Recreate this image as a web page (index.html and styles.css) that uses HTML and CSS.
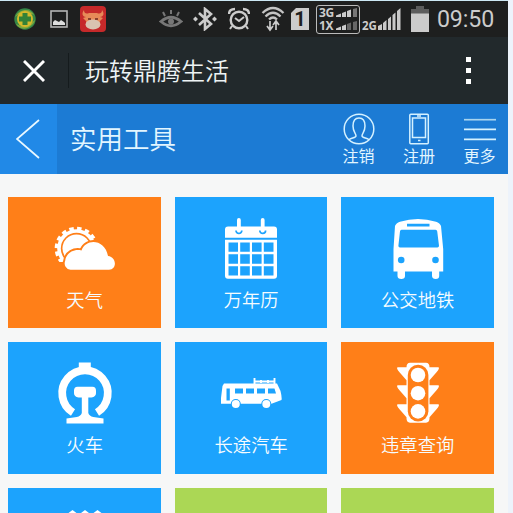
FILE: index.html
```html
<!DOCTYPE html>
<html lang="zh-CN">
<head>
<meta charset="utf-8">
<title>实用工具</title>
<link rel="stylesheet" href="styles.css">
</head>
<body>
<div class="phone">
  <div class="status">
    <svg class="s-shield" width="22" height="22" viewBox="0 0 22 22"><circle cx="11" cy="11" r="10.7" fill="#358747"/><path d="M1 9C5 1 16-1 20 7C12 3 6 5 1 9M21 12C18 21 7 24 2 16C10 20 16 17 21 12" fill="#87a83a"/><circle cx="11" cy="11" r="8" fill="#d4b92b"/><path d="M8.500 5h5v3.500h3.500v5h-3.500v3.500h-5v-3.500H5v-5h3.500z" fill="#338237"/></svg>
    <svg class="s-photo" width="18" height="18" viewBox="0 0 18 18"><rect x="1" y="1" width="16" height="16" fill="none" stroke="#b5b5b5" stroke-width="1.600"/><path d="M3 15v-3l2-2 2 1 2 1 2-2 3 2 1 1v2z" fill="#ddd"/></svg>
    <svg class="s-bull" width="26" height="26" viewBox="0 0 26 26"><rect width="26" height="26" rx="4" fill="#c6292a"/><path d="M4 4c0 4 3 4 5 3h8c2 1 5 1 5-3 3 4 1 7-2 7l3 1-3 3-1 5H7l-1-5-3-3 3-1C3 11 1 8 4 4" fill="#e78a58"/><ellipse cx="13" cy="18.500" rx="7.500" ry="5" fill="#d9c3b0"/><path d="M8 13h3M15 13h3" stroke="#6d2921" stroke-width="1.500"/></svg>
    <svg class="s-eye" width="24" height="20" viewBox="0 0 24 20"><path d="M2 12.500Q12 4 22 12.500Q12 21 2 12.500z" fill="none" stroke="#777" stroke-width="2.800"/><circle cx="12" cy="12.500" r="3" fill="#777"/><path d="M12 1v4M4 3l2 4M20 3l-2 4" stroke="#777" stroke-width="2"/></svg>
    <svg class="s-bt" width="24" height="24" viewBox="0 0 24 24"><path d="M6 6l12 11-6 5V2l6 5L6 18" fill="none" stroke="#ccc" stroke-width="2.600"/><path d="M0 12l2.500-2.500L5 12l-2.500 2.500zM19 12l2.500-2.500L24 12l-2.500 2.500z" fill="#ccc"/></svg>
    <svg class="s-alarm" width="22" height="24" viewBox="0 0 22 24"><circle cx="11" cy="13" r="8.300" fill="none" stroke="#ccc" stroke-width="2.400"/><path d="M7 11l4 3 5-4M4 19l-2 3M18 19l2 3" fill="none" stroke="#ccc" stroke-width="2"/><path d="M1 7q0-5 6-5M21 7q0-5-6-5" fill="none" stroke="#ccc" stroke-width="2.400"/></svg>
    <svg class="s-wifi" width="24" height="26" viewBox="0 0 24 26"><path d="M1.500 7Q12-3 22.500 7M4.500 10.500Q12 3 19.500 10.500M8 13.500Q12 9.500 16 13.500" fill="none" stroke="#c4c4c4" stroke-width="2.300"/><path d="M9 15v8M6 20l3 4 3-4M15 24v-8M12 19l3-4 3 4" fill="none" stroke="#ccc" stroke-width="1.700"/></svg>
    <span class="sim">1</span>
    <div class="dual">
      <div class="dual-row"><span>3G</span><svg width="23" height="9" viewBox="0 0 23 9"><path d="M1 9V7.500l5-2V9zM7 9V5l4-1.500V9zM12 9V3l4-1.500V9z" fill="#ccc"/><path d="M18 9V1l4-1v9z" fill="#777"/></svg></div>
      <div class="dual-row"><span>1X</span><svg width="23" height="9" viewBox="0 0 23 9"><path d="M1 9V7.500l5-2V9zM7 9V5l4-1.500V9z" fill="#ccc"/><path d="M12 9V3l4-1.500V9zM18 9V1l4-1v9z" fill="#666"/></svg></div>
    </div>
    <span class="g2">2G</span>
    <svg class="s-signal" width="23" height="22" viewBox="0 0 23 22"><path d="M0 22v-4l4-2v6zM5 22v-7l3.500-3v10zM10 22V11l3-2.500V22zM14.500 22V7l3-2.500V22zM19 22V3l3.500-3v22z" fill="#c9c9c9"/></svg>
    <svg class="s-battery" width="18" height="26" viewBox="0 0 18 26"><path d="M5 0h8v3h5v5H0V3h5z" fill="#5d5d5d"/><path d="M0 7.500h18V26H0z" fill="#cbcbcb"/></svg>
    <span class="clock">09:50</span>
  </div>

  <div class="nav">
    <svg class="close" width="22" height="22" viewBox="0 0 22 22"><path d="M1 1l20 20M21 1L1 21" stroke="#fff" stroke-width="2.900"/></svg>
    <h1 class="nav-title"><span>玩转鼎腾生活</span></h1>
    <div class="dots"><i></i><i></i><i></i></div>
  </div>

  <div class="header">
    <div class="back"><svg width="24" height="40" viewBox="0 0 24 40"><path d="M23 1L1 20l22 19" fill="none" stroke="#e9f8ff" stroke-width="1.700"/></svg></div>
    <h2 class="title">实用工具</h2>
    <div class="actions">
      <div class="action">
        <svg width="32" height="32" viewBox="0 0 32 32" fill="none" stroke="#d4f1ff" stroke-width="1.500"><circle cx="16" cy="16" r="14.800"/><path d="M6 27c1-2 7-2 7-4 0-3-3-4-3-10 0-5 2-8 6-8s6 3 6 8c0 6-3 7-3 10 0 2 6 2 7 4"/></svg>
        <span>注销</span>
      </div>
      <div class="action">
        <svg width="32" height="32" viewBox="0 0 32 32" fill="none" stroke="#d4f1ff" stroke-width="1.500"><rect x="6.800" y="1.300" width="18.500" height="29.500" rx="1"/><rect x="9.500" y="5" width="13" height="19.500"/><path d="M14 3h4M15 27.500h2.500" stroke-width="1.600"/></svg>
        <span>注册</span>
      </div>
      <div class="action">
        <svg width="32" height="32" viewBox="0 0 32 32" stroke-width="1.700"><path d="M0 6.700h32" stroke="#a8d4ee"/><path d="M0 16.300h32M0 26.300h32" stroke="#d4f2ff"/></svg>
        <span>更多</span>
      </div>
    </div>
  </div>

  <div class="grid">
    <div class="tile orange">
      <svg class="icon" viewBox="0 0 60 60">
        <circle cx="21.500" cy="30.500" r="19.800" fill="none" stroke="#fff" stroke-width="4" stroke-dasharray="4.400 3.376"/>
        <circle cx="21.500" cy="30.500" r="17.500" fill="none" stroke="#fff" stroke-width="3.600"/>
        <circle cx="21.500" cy="30.500" r="14" fill="#fff"/>
        <path d="M-2 44h16v10H-2zM39 32h8v12h-8z" fill="#ff7f18"/>
        <path d="M15.500 51.800a6.500 6.500 0 0 1-5.300-9C11 35 19 30.500 26.500 32.500C31 20 50 21 53 38C62 39 62 51.800 54 51.800z" fill="#fff" stroke="#ff7f18" stroke-width="4" paint-order="stroke"/>
      </svg>
      <span class="label">天气</span>
    </div>
    <div class="tile">
      <svg class="icon" viewBox="0 0 60 60">
        <path d="M7 8.500h46q3 0 3 3v8.300H4v-8.300q0-3 3-3M4 21.800h52v36q0 3-3 3H7q-3 0-3-3z" fill="#fff"/>
        <path d="M7.500 24.500h9.500v9.200H7.500zM19.200 24.500h9.600v9.200h-9.600zM31 24.500h9.600v9.200H31zM42.800 24.500h9.700v9.200h-9.700zM7.500 36.300h9.500v9.400H7.500zM19.200 36.300h9.600v9.400h-9.600zM31 36.300h9.600v9.400H31zM42.800 36.300h9.700v9.400h-9.700zM7.500 48.300h9.500v9.200H7.500zM19.200 48.300h9.600v9.200h-9.600zM31 48.300h9.600v9.200H31zM42.800 48.300h9.700v9.200h-9.700z" fill="#1ca3fd"/>
        <path d="M15 12.500a2.900 2.900 0 1 0 5.800 0M38.800 12.500a2.900 2.900 0 1 0 5.800 0" fill="none" stroke="#1ca3fd" stroke-width="1.700"/>
        <path d="M17.900 2v9M41.700 2v9" stroke="#fff" stroke-width="3.800" stroke-linecap="round"/>
      </svg>
      <span class="label">万年历</span>
    </div>
    <div class="tile">
      <svg class="icon" viewBox="0 0 60 60">
        <path d="M7 8Q8 5 12 3.700Q30-1.500 48 3.700Q52 5 53 8L55.200 31v22.500h-4V58q0 3-3.500 3t-3.700-3v-4.500H17V58q0 3-3.700 3T9.500 58v-4.500H5.500V31z" fill="#fff"/>
        <path d="M13.500 11.800h34q1.500 0 1.700 1.500l1.800 14.500q0 1.700-1.600 1.700H12q-1.700 0-1.600-1.700L12 13.300q.2-1.500 1.500-1.500M19 5.700h22.500v2.800H19z" fill="#1ca3fd"/>
        <circle cx="13.200" cy="42" r="3.300" fill="#1ca3fd"/><circle cx="47.500" cy="42" r="3.300" fill="#1ca3fd"/>
      </svg>
      <span class="label">公交地铁</span>
    </div>
    <div class="tile">
      <svg class="icon" viewBox="0 0 60 60">
        <path d="M18 49.500A22.800 22.800 0 1 1 42 49.500" fill="none" stroke="#fff" stroke-width="7.800"/>
        <path d="M23.800-.5h12v7h-12zM22.500 23.700h15q3.500 0 3.500 4v2.500q0 3.500-4.500 4.300h-3.200V50q1 3 5 4l10.200 1.500v5H11.500v-5L21.800 54q4-1 5-4V34.500H23.500q-4.500-.8-4.500-4.300v-2.500q0-4 3.500-4" fill="#fff"/>
      </svg>
      <span class="label">火车</span>
    </div>
    <div class="tile">
      <svg class="icon" viewBox="0 0 60 60">
        <path d="M3 20.500h53l3.500 7.500q1.500 6 1 9l-10 3.800H0V35L1.500 23z" fill="#fff"/>
        <path d="M33.500 15v6M53.500 15v6M33.500 18.500h20M40 17v3M47 17v3" stroke="#fff" stroke-width="1.900"/>
        <path d="M5.500 25.500h3.300v12H5.500zM14 25.500h8v5h-8zM25 25.500h8v5h-8zM36 25.500h8v5h-8zM47 25.500h6.500l1.500 5h-8z" fill="#1ca3fd"/>
        <circle cx="14.800" cy="41" r="4" fill="#fff" stroke="#1ca3fd" stroke-width="2" paint-order="stroke"/><circle cx="45.300" cy="41" r="4" fill="#fff" stroke="#1ca3fd" stroke-width="2" paint-order="stroke"/>
      </svg>
      <span class="label">长途汽车</span>
    </div>
    <div class="tile orange">
      <svg class="icon" viewBox="0 0 60 60">
        <path d="M22-.2h16q3.500 0 3.500 4.500h9q1.500 1-2 5l-7 8v5h9q1.500 1-2 5l-7 8v6h9q1.500 1-2 5l-7 8v1q0 4-3.500 4.500H22q-3.500-.5-3.500-4.500v-1l-7-8q-3.500-4-2-5h9v-6l-7-8q-3.500-4-2-5h9v-5l-7-8q-3.500-4-2-5h9Q18.500-.2 22-.2" fill="#fff"/>
        <rect x="19.800" y="1.800" width="20.600" height="56.800" rx="10.300" fill="#ff7f18"/>
        <circle cx="30" cy="12" r="7.300" fill="#fff"/><circle cx="30" cy="30.200" r="7.300" fill="#fff"/><circle cx="30" cy="48.400" r="7.300" fill="#fff"/>
      </svg>
      <span class="label">违章查询</span>
    </div>
    <div class="tile">
      <svg class="icon" viewBox="0 0 60 60"><path d="M13.500 4l4-3 4 3v6h-8zM26 4l4-3 4 3v6h-8zM38.500 4l4-3 4 3v6h-8z" fill="#fff"/></svg>
    </div>
    <div class="tile green"></div>
    <div class="tile green"></div>
  </div>
</div>
</body>
</html>
```
FILE: styles.css
```css
* { box-sizing: border-box; }
html, body { height: 100%; }
body {
  margin: 0;
  overflow: hidden;
  background: #edf3fb;
  font-family: "Noto Sans CJK SC", sans-serif;
}
svg { display: block; flex: none; }
.phone {
  width: 508px;
  height: 513px;
  overflow: hidden;
  background: #f6f7f7;
  border-top: 1px solid #cde8f4;
}
.status {
  display: flex;
  align-items: center;
  height: 36px;
  padding-left: 14px;
  background: #1e1f1f;
  color: #ccc;
}
.s-photo { margin-left: 14px; }
.s-bull { margin-left: 12px; }
.s-eye { margin-left: 53px; }
.s-bt { margin-left: 10px; }
.s-alarm { margin-left: 11px; }
.s-wifi { margin-left: 11px; }
.sim {
  width: 18px;
  height: 22px;
  margin-left: 6px;
  background: #ccc;
  color: #1e1f1f;
  clip-path: polygon(5px 0, 100% 0, 100% 100%, 0 100%, 0 5px);
  font: bold 20px/22px Roboto, sans-serif;
  text-align: center;
}
.dual {
  display: flex;
  flex-direction: column;
  justify-content: center;
  gap: 1px;
  width: 44px;
  height: 29px;
  margin-left: 7px;
  border: 1px solid #bbb;
  border-radius: 3px;
}
.dual-row {
  display: flex;
  align-items: center;
  justify-content: space-between;
  height: 12px;
  padding: 0 1px 0 2px;
  font: bold 12px/12px "Noto Sans", sans-serif;
  letter-spacing: -.3px;
}
.dual-row span { line-height: 12px; }
.g2 {
  margin: 13px 0 0 2px;
  font: bold 11.500px/14px "Open Sans", sans-serif;
}
.s-signal { margin-left: 1px; }
.s-battery { margin-left: 10px; }
.clock {
  margin-left: 8px;
  font: 23.200px/34px Roboto, sans-serif;
  letter-spacing: -.1px;
}
.nav {
  display: flex;
  align-items: center;
  height: 67px;
  padding: 0 37px 0 23px;
  background: #22292c;
}
.nav-title {
  display: flex;
  align-items: center;
  height: 35px;
  margin: 0 0 0 23px;
  padding: 0 0 3px 16px;
  border-left: 1px solid #151b1d;
  color: #eef4f5;
  font-size: 24px;
  font-weight: 350;
}
.dots {
  display: flex;
  flex-direction: column;
  gap: 6px;
  margin-left: auto;
}
.dots i { width: 5px; height: 5px; background: #fff; }
.header {
  display: flex;
  height: 70px;
  background: #1c7bd4;
  color: #e2f6ff;
}
.back {
  display: flex;
  align-items: center;
  width: 57px;
  padding-left: 16px;
  background: #2189e7;
}
.title {
  margin: 0 0 0 13px;
  font-size: 26.500px;
  font-weight: 350;
  line-height: 67px;
}
.actions {
  display: flex;
  gap: 28.500px;
  margin-left: auto;
  padding: 9px 12.500px 0 0;
}
.action {
  display: flex;
  flex-direction: column;
  align-items: center;
  width: 32px;
  font-size: 16px;
  line-height: 20px;
}
.action span { white-space: nowrap; }
.grid {
  display: grid;
  grid-template-columns: repeat(3, 152.500px);
  grid-auto-rows: 131.300px;
  gap: 14px;
  padding: 23px 0 0 8.400px;
}
.tile {
  display: flex;
  flex-direction: column;
  align-items: center;
  padding-top: 21px;
  background: #1ca3fd;
  color: #f6fcff;
}
.orange { background: #ff7f18; }
.green { background: #abd755; }
.icon { width: 60px; height: 60px; overflow: visible; }
.label {
  margin-top: 7px;
  font-size: 18.300px;
  font-weight: 350;
  line-height: 28px;
}
```
